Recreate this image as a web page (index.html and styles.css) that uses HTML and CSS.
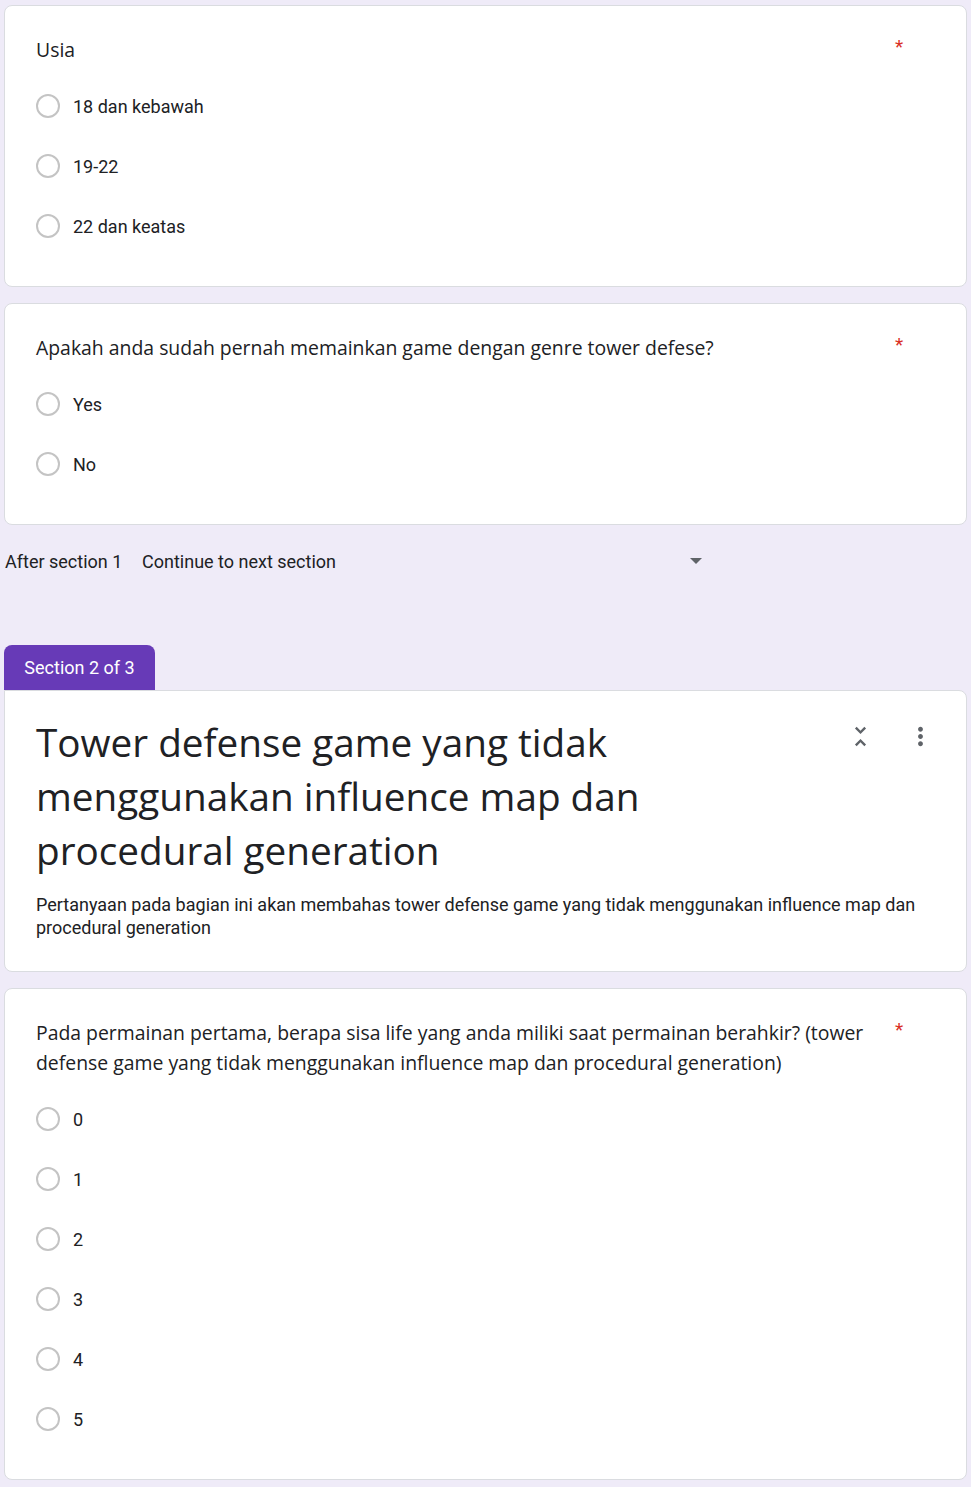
FILE: index.html
```html
<!DOCTYPE html>
<html lang="id">
<head>
<meta charset="utf-8">
<title>Form</title>
<link rel="stylesheet" href="styles.css">
</head>
<body>
<div class="page">
  <div class="card q-card">
    <div class="q-head"><div class="q-text">Usia</div><span class="star">*</span></div>
    <div class="options">
      <div class="opt"><span class="radio"></span><span class="opt-label">18 dan kebawah</span></div>
      <div class="opt"><span class="radio"></span><span class="opt-label">19-22</span></div>
      <div class="opt"><span class="radio"></span><span class="opt-label">22 dan keatas</span></div>
    </div>
  </div>

  <div class="card q-card">
    <div class="q-head"><div class="q-text">Apakah anda sudah pernah memainkan game dengan genre tower defese?</div><span class="star">*</span></div>
    <div class="options">
      <div class="opt"><span class="radio"></span><span class="opt-label">Yes</span></div>
      <div class="opt"><span class="radio"></span><span class="opt-label">No</span></div>
    </div>
  </div>

  <div class="after-row">
    <span class="after-label">After section 1</span>
    <div class="after-select"><span>Continue to next section</span><span class="caret"></span></div>
  </div>

  <div class="section-tab">Section 2 of 3</div>
  <div class="card section-card">
    <div class="section-head">
      <div class="section-title">Tower defense game yang tidak menggunakan influence map dan procedural generation</div>
      <div class="section-icons">
        <svg class="icon" viewBox="0 0 24 24" width="29" height="29"><path d="M7.41 18.59L8.83 20 12 16.830 15.17 20l1.41-1.41L12 14l-4.59 4.59zm9.18-13.18L15.17 4 12 7.17 8.83 4 7.41 5.41 12 10l4.59-4.59z"/></svg>
        <svg class="icon" viewBox="0 0 24 24" width="29" height="29"><path d="M12 8c1.1 0 2-.9 2-2s-.9-2-2-2-2 .9-2 2 .9 2 2 2zm0 2c-1.1 0-2 .9-2 2s.9 2 2 2 2-.9 2-2-.9-2-2-2zm0 6c-1.1 0-2 .9-2 2s.9 2 2 2 2-.9 2-2-.9-2-2-2z"/></svg>
      </div>
    </div>
    <div class="section-desc">Pertanyaan pada bagian ini akan membahas tower defense game yang tidak menggunakan influence map dan procedural generation</div>
  </div>

  <div class="card q-card">
    <div class="q-head"><div class="q-text">Pada permainan pertama, berapa sisa life yang anda miliki saat permainan berahkir? (tower defense game yang tidak menggunakan influence map dan procedural generation)</div><span class="star">*</span></div>
    <div class="options">
      <div class="opt"><span class="radio"></span><span class="opt-label">0</span></div>
      <div class="opt"><span class="radio"></span><span class="opt-label">1</span></div>
      <div class="opt"><span class="radio"></span><span class="opt-label">2</span></div>
      <div class="opt"><span class="radio"></span><span class="opt-label">3</span></div>
      <div class="opt"><span class="radio"></span><span class="opt-label">4</span></div>
      <div class="opt"><span class="radio"></span><span class="opt-label">5</span></div>
    </div>
  </div>
</div>
</body>
</html>
```

FILE: styles.css
```css
* { box-sizing: border-box; }
html, body { margin: 0; padding: 0; }
body {
  background: #efebf8;
  font-family: Roboto, "Liberation Sans", sans-serif;
  color: #202124;
}
.page {
  padding: 5px 4px 8px;
}
.card {
  background: #fff;
  border: 1px solid #dadce0;
  border-radius: 8px;
}
.q-card {
  padding: 29px 31px 30px 31px;
  margin-bottom: 16px;
}
.q-head {
  display: flex;
  align-items: flex-start;
}
.q-text {
  flex: 1;
  font-family: "Open Sans", "Noto Sans", sans-serif;
  font-size: 19.4px;
  line-height: 30px;
  color: #202124;
  padding-right: 12px;
}
.star {
  width: 10px;
  margin-right: 30px;
  color: #d93025;
  font-size: 19px;
  line-height: 24px;
}
.options {
  margin-top: 11px;
}
.opt {
  height: 60px;
  display: flex;
  align-items: center;
  gap: 13px;
}
.radio {
  width: 24px;
  height: 24px;
  border: 2px solid #c4c4c4;
  border-radius: 50%;
  flex: none;
}
.opt-label {
  font-size: 18px;
  color: #202124;
}
.after-row {
  display: flex;
  align-items: center;
  height: 24px;
  margin-top: 24px;
  font-size: 18px;
}
.after-label {
  width: 138px;
  padding-left: 1px;
}
.after-select {
  width: 570px;
  display: flex;
  align-items: center;
  justify-content: space-between;
  padding-right: 10px;
}
.caret {
  width: 0;
  height: 0;
  border-left: 6px solid transparent;
  border-right: 6px solid transparent;
  border-top: 6px solid #5f6368;
}
.section-tab {
  margin-top: 72px;
  width: 151px;
  height: 45px;
  background: #673ab7;
  color: #fff;
  border-radius: 8px 8px 0 0;
  font-size: 18px;
  display: flex;
  align-items: center;
  justify-content: center;
}
.section-card {
  border-top-left-radius: 0;
  padding: 24px 31px 32px 31px;
  margin-bottom: 16px;
}
.section-head {
  display: flex;
  align-items: flex-start;
}
.section-title {
  flex: 1;
  max-width: 720px;
  font-family: "Open Sans", "Noto Sans", sans-serif;
  font-size: 38.7px;
  line-height: 54px;
  color: #202124;
}
.section-icons {
  margin-left: auto;
  margin-top: 7px;
  display: flex;
  gap: 31px;
}
.icon {
  fill: #5f6368;
  display: block;
}
.section-desc {
  margin-top: 16px;
  font-size: 18px;
  line-height: 23px;
  color: #202124;
}
```
